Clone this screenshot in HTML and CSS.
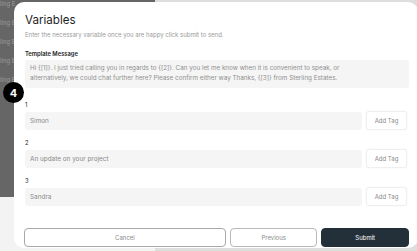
FILE: index.html
```html
<!DOCTYPE html>
<html>

<head>
  <link rel="stylesheet" href="styles.css">
</head>

<body>
  <div class="page">
    <div class="sidebar">
      <div class="side-row">ling E</div>
      <div class="side-row">ling E</div>
      <div class="side-row">ling E</div>
      <div class="side-row">ling E</div>
      <div class="side-row">ling E</div>
    </div>
    <div class="page-main"></div>
  </div>

  <div class="modal">
    <h1>Variables</h1>
    <p class="subtitle">Enter the necessary variable once you are happy click submit to send.</p>

    <div class="field-label strong">Template Message</div>
    <div class="template-box">
      Hi {[1]}. I just tried calling you in regards to {[2]}. Can you let me know when it is convenient to speak, or
      alternatively, we could chat further here? Please confirm either way Thanks, {[3]} from Sterling Estates.
    </div>

    <div class="variables">
      <div class="variable">
        <div class="field-label">1</div>
        <div class="variable-row">
          <div class="input">Simon</div>
          <button class="tag-button">Add Tag</button>
        </div>
      </div>
      <div class="variable">
        <div class="field-label">2</div>
        <div class="variable-row">
          <div class="input">An update on your project</div>
          <button class="tag-button">Add Tag</button>
        </div>
      </div>
      <div class="variable">
        <div class="field-label">3</div>
        <div class="variable-row">
          <div class="input">Sandra</div>
          <button class="tag-button">Add Tag</button>
        </div>
      </div>
    </div>

    <div class="actions">
      <button class="btn btn-cancel">Cancel</button>
      <button class="btn btn-prev">Previous</button>
      <button class="btn btn-submit">Submit</button>
    </div>
  </div>

  <div class="step-badge">4</div>
</body>

</html>
```

FILE: styles.css
```css
body {
  margin: 0;
  padding: 0;
  width: 417px;
  height: 251px;
  overflow: hidden;
  font-family: 'Inter', 'Lato', sans-serif;
  background-color: #f3f3f3;
  position: relative;
}

.page {
  display: flex;
  height: 251px;
}

.sidebar {
  width: 155px;
  height: 197px;
  background-color: #666666;
  display: flex;
  flex-direction: column;
  gap: 11px;
}

.side-row {
  font-size: 6px;
  color: #9b9b9b;
  height: 8px;
  white-space: nowrap;
}

.page-main {
  flex: 1;
  height: 251px;
  background-color: #dedede;
}

.modal {
  position: absolute;
  top: 2px;
  left: 14px;
  width: 384px;
  height: 246px;
  padding: 0 9px 0 11px;
  background-color: #ffffff;
  border-radius: 10px;
  display: flex;
  flex-direction: column;
}

h1 {
  font-size: 11.6px;
  font-weight: 400;
  color: #1e1e1e;
  margin: 10px 0 0;
  line-height: 16px;
}

.subtitle {
  font-size: 6px;
  color: #9a9a9a;
  margin: 3px 0 0;
  line-height: 8px;
}

.field-label {
  font-size: 5.8px;
  color: #222222;
  line-height: 8px;
}

.field-label.strong {
  font-weight: 600;
  margin-top: 11px;
}

.template-box {
  margin-top: 2px;
  background-color: #f5f5f5;
  border-radius: 3px;
  height: 28px;
  box-sizing: border-box;
  padding: 4px 50px 0 5px;
  font-size: 6.3px;
  line-height: 9.5px;
  color: #8f8f8f;
}

.variables {
  display: flex;
  flex-direction: column;
  gap: 9px;
  margin-top: 13px;
}

.variable {
  display: flex;
  flex-direction: column;
  gap: 2px;
}

.variable-row {
  display: flex;
  gap: 4px;
  align-items: center;
}

.input {
  flex: 1;
  height: 18px;
  background-color: #f5f5f5;
  border-radius: 3px;
  padding: 0 5px;
  font-size: 6.4px;
  line-height: 18px;
  color: #8a8a8a;
}

.tag-button {
  width: 41px;
  height: 19px;
  margin-right: 2px;
  padding: 0;
  background-color: #ffffff;
  border: 1px solid #efefef;
  border-radius: 3px;
  box-shadow: 0 0 2px rgba(0, 0, 0, 0.06);
  font-family: inherit;
  font-size: 6px;
  color: #8a8a8a;
}

.actions {
  display: flex;
  gap: 4px;
  margin-top: auto;
  margin-bottom: 1px;
  margin-left: -1px;
}

.btn {
  height: 19px;
  padding: 0;
  border-radius: 4px;
  font-family: inherit;
  font-size: 6px;
  background-color: #ffffff;
  color: #8a8a8a;
}

.btn-cancel {
  width: 203px;
  border: 1px solid #a8a8a8;
}

.btn-prev {
  width: 88px;
  border: 1px solid #b8b8b8;
}

.btn-submit {
  width: 88px;
  border: 1px solid #243039;
  background-color: #243039;
  color: #ffffff;
}

.step-badge {
  position: absolute;
  top: 82px;
  left: 3px;
  width: 21px;
  height: 21px;
  border-radius: 50%;
  background-color: #000000;
  color: #ffffff;
  font-size: 11px;
  font-weight: 700;
  display: flex;
  align-items: center;
  justify-content: center;
}
```
